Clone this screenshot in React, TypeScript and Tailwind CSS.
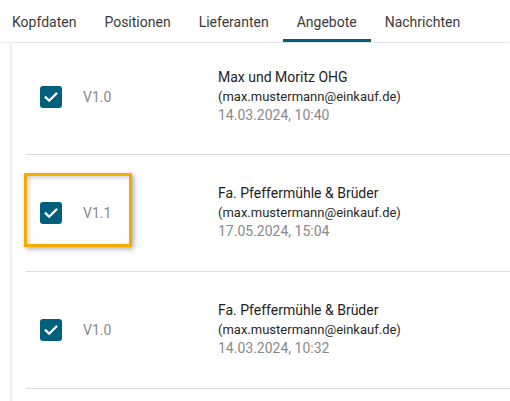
import React from 'react';

interface Offer {
  version: string;
  supplier: string;
  email: string;
  date: string;
  highlighted?: boolean;
}

const tabs = ['Kopfdaten', 'Positionen', 'Lieferanten', 'Angebote', 'Nachrichten'];

const offers: Offer[] = [
  { version: 'V1.0', supplier: 'Max und Moritz OHG', email: '(max.mustermann@einkauf.de)', date: '14.03.2024, 10:40' },
  { version: 'V1.1', supplier: 'Fa. Pfeffermühle & Brüder', email: '(max.mustermann@einkauf.de)', date: '17.05.2024, 15:04', highlighted: true },
  { version: 'V1.0', supplier: 'Fa. Pfeffermühle & Brüder', email: '(max.mustermann@einkauf.de)', date: '14.03.2024, 10:32' }
];

function Checkbox() {
  return (
    <span className="flex h-[22px] w-[22px] shrink-0 items-center justify-center rounded-[3px] bg-[#005f7b]">
      <svg viewBox="0 0 24 24" className="h-[18px] w-[18px]" fill="none" stroke="white" strokeWidth="3" strokeLinecap="square">
        <path d="M5 12.5l4.5 4.5L19 7.5" />
      </svg>
    </span>
  );
}

export default function App() {
  return (
    <div className="h-[401px] w-[510px] overflow-hidden bg-white font-['Roboto',_'Liberation_Sans',_sans-serif]">
      <div className="flex h-[43px] border-b border-[#eeeeee] -ml-[2px]">
        {tabs.map(tab => (
          <div key={tab} className="relative flex h-full items-center px-[14px] pt-[2px] text-[14px] text-[#3a3a3a]">
            {tab}
            {tab === 'Angebote' && (
              <span className="absolute bottom-0 left-0 right-0 h-[3px] bg-[#00607a]" />
            )}
          </div>
        ))}
      </div>

      <div className="ml-[12px] h-full pl-[14px] shadow-[-2px_0_3px_rgba(0,0,0,0.09)]">
        {offers.map((offer, i) => (
          <div
            key={i}
            className={`relative flex items-center border-b border-[#dcdcdc] pl-[14px] ${i === 0 ? 'h-[112px] pb-[3px]' : 'h-[117px]'}`}
          >
            {offer.highlighted && (
              <span className="absolute left-[-2px] top-[18px] h-[74px] w-[108px] border-[3px] border-[#f5ab00] shadow-[2px_2px_5px_rgba(0,0,0,0.32),inset_2px_2px_4px_rgba(0,0,0,0.18)]" />
            )}
            <Checkbox />
            <span className="ml-[21px] w-[135px] text-[14px] text-[#8a8a8a]">{offer.version}</span>
            <div className="-mt-[2px] flex flex-col">
              <span className="text-[14px] leading-[19px] text-[#1e1e1e]">{offer.supplier}</span>
              <span className="text-[13px] leading-[19px] text-[#2a2a2a]">{offer.email}</span>
              <span className="text-[14px] leading-[19px] text-[#8a8a8a]">{offer.date}</span>
            </div>
          </div>
        ))}
      </div>
    </div>
  );
}
